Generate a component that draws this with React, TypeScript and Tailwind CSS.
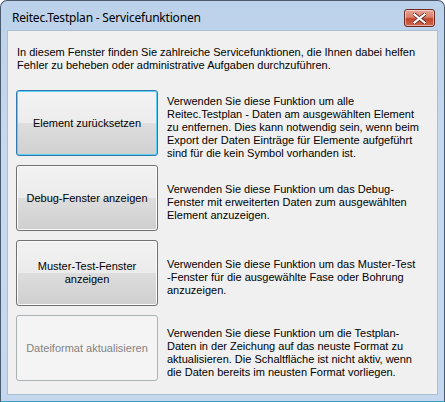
const rows: { label: string[]; lines: string[]; variant: "focus" | "normal" | "disabled" }[] = [
  {
    label: ["Element zurücksetzen"],
    variant: "focus",
    lines: [
      "Verwenden Sie diese Funktion um alle",
      "Reitec.Testplan - Daten am ausgewählten Element",
      "zu entfernen. Dies kann notwendig sein, wenn beim",
      "Export der Daten Einträge für Elemente aufgeführt",
      "sind für die kein Symbol vorhanden ist.",
    ],
  },
  {
    label: ["Debug-Fenster anzeigen"],
    variant: "normal",
    lines: [
      "Verwenden Sie diese Funktion um das Debug-",
      "Fenster mit erweiterten Daten zum ausgewählten",
      "Element anzuzeigen.",
    ],
  },
  {
    label: ["Muster-Test-Fenster", "anzeigen"],
    variant: "normal",
    lines: [
      "Verwenden Sie diese Funktion um das Muster-Test",
      "-Fenster für die ausgewählte Fase oder Bohrung",
      "anzuzeigen.",
    ],
  },
  {
    label: ["Dateiformat aktualisieren"],
    variant: "disabled",
    lines: [
      "Verwenden Sie diese Funktion um die Testplan-",
      "Daten in der Zeichung auf das neuste Format zu",
      "aktualisieren. Die Schaltfläche ist nicht aktiv, wenn",
      "die Daten bereits im neusten Format vorliegen.",
    ],
  },
];

function WinButton({ label, variant }: { label: string[]; variant: "focus" | "normal" | "disabled" }) {
  const base =
    "flex h-[66px] w-[142px] shrink-0 flex-col items-center justify-center rounded-[3px] border text-[11px] leading-[13px]";
  const styles = {
    focus:
      "border-[#2f79ad] bg-[linear-gradient(to_bottom,#f3f3f3_0%,#ececec_50%,#dedede_50%,#d0d0d0_100%)] text-black shadow-[inset_0_0_0_1px_#5fcff7]",
    normal:
      "border-[#707070] bg-[linear-gradient(to_bottom,#f2f2f2_0%,#ebebeb_50%,#dddddd_50%,#cfcfcf_100%)] text-black shadow-[inset_0_0_0_1px_#fbfbfb]",
    disabled: "border-[#adb2b5] bg-[#f4f4f4] text-[#838383]",
  };
  return (
    <button type="button" className={`${base} ${styles[variant]}`}>
      {label.map((l) => (
        <span key={l}>{l}</span>
      ))}
    </button>
  );
}

export default function App() {
  return (
    <div className="h-[402px] w-[445px] bg-white font-['Liberation_Sans',Arial,sans-serif]">
      <div className="flex h-[402px] w-[445px] flex-col rounded-t-[7px] border border-[#4a5b70] border-b-[#3b9bc6] bg-[linear-gradient(to_bottom,#bcd2ea_0%,#c6daef_40%,#c3d8ee_100%)]">
        {/* Title bar */}
        <div className="flex h-[29px] shrink-0 items-start justify-between pl-[11px] pr-[9px]">
          <span className="pt-[10px] text-[12px] leading-[14px] text-black font-['Noto_Sans',sans-serif] tracking-[-0.2px]">
            Reitec.Testplan - Servicefunktionen
          </span>
          <button
            type="button"
            className="mt-[8px] flex h-[18px] w-[31px] items-center justify-center rounded-[3px] border border-[#6d2a24] bg-[linear-gradient(to_bottom,#e8a493_0%,#d7826d_45%,#c0452c_55%,#d06a4f_100%)] shadow-[inset_0_0_0_1px_rgba(255,255,255,0.45)]"
          >
            <svg width="13" height="11" viewBox="0 0 13 11">
              <path
                d="M1.5 1.5 L11.5 9.5 M11.5 1.5 L1.5 9.5"
                stroke="#5a2018"
                strokeWidth="3.6"
                strokeLinecap="square"
              />
              <path
                d="M1.5 1.5 L11.5 9.5 M11.5 1.5 L1.5 9.5"
                stroke="#ffffff"
                strokeWidth="2.2"
                strokeLinecap="square"
              />
            </svg>
          </button>
        </div>

        {/* Client area */}
        <div className="mx-[6px] h-[365px] shrink-0 border border-[#aebfd2] bg-[#f0f0f0] text-[11px] leading-[13px] text-black">
          <p className="pl-[9px] pt-[15px]">
            In diesem Fenster finden Sie zahlreiche Servicefunktionen, die Ihnen dabei helfen
            <br />
            Fehler zu beheben oder administrative Aufgaben durchzuführen.
          </p>

          <div className="mt-[18px] flex flex-col gap-[9px] pl-[8px]">
            {rows.map((r) => (
              <div key={r.label[0]} className="flex h-[66px] items-center gap-[9px]">
                <WinButton label={r.label} variant={r.variant} />
                <p className="mt-[9px] whitespace-nowrap">
                  {r.lines.map((l, i) => (
                    <span key={i} className="block">
                      {l}
                    </span>
                  ))}
                </p>
              </div>
            ))}
          </div>
        </div>
      </div>
    </div>
  );
}
